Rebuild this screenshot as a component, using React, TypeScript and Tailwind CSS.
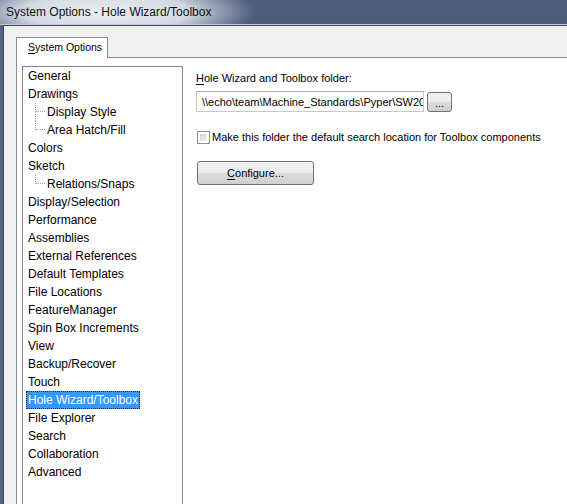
import React from 'react'

type Item = { label: string; child?: boolean; last?: boolean; selected?: boolean }

const items: Item[] = [
  { label: 'General' },
  { label: 'Drawings' },
  { label: 'Display Style', child: true },
  { label: 'Area Hatch/Fill', child: true, last: true },
  { label: 'Colors' },
  { label: 'Sketch' },
  { label: 'Relations/Snaps', child: true, last: true },
  { label: 'Display/Selection' },
  { label: 'Performance' },
  { label: 'Assemblies' },
  { label: 'External References' },
  { label: 'Default Templates' },
  { label: 'File Locations' },
  { label: 'FeatureManager' },
  { label: 'Spin Box Increments' },
  { label: 'View' },
  { label: 'Backup/Recover' },
  { label: 'Touch' },
  { label: 'Hole Wizard/Toolbox', selected: true },
  { label: 'File Explorer' },
  { label: 'Search' },
  { label: 'Collaboration' },
  { label: 'Advanced' },
]

function TreeRow({ item }: { item: Item }) {
  return (
    <div className="h-[18px] flex items-center">
      {item.child ? (
        <div className="pl-[12px] h-full flex">
          {/* dotted connector */}
          <div className="w-[10px] h-full flex flex-col">
            <div className="h-[9px] border-l border-b border-dotted border-[#a0a0a0]" />
            {!item.last && <div className="flex-1 border-l border-dotted border-[#a0a0a0]" />}
          </div>
        </div>
      ) : (
        <div className="w-[3px]" />
      )}
      <span
        className={`px-[2px] h-[18px] flex items-center whitespace-nowrap ${
          item.selected
            ? 'bg-[#3399ff] text-white outline-1 outline-dotted outline-[#2a2a2a] -outline-offset-1'
            : 'text-black'
        }`}
      >
        {item.label}
      </span>
    </div>
  )
}

export default function App() {
  return (
    <div className="w-[567px] h-[504px] overflow-hidden flex flex-col bg-[#56647f] font-['Liberation_Sans',Arial,sans-serif]">
      {/* Title bar */}
      <div className="h-[25px] shrink-0 flex items-center pl-[6px] text-[12px] text-[#111] border-b border-[#c3cad6] bg-[radial-gradient(ellipse_150px_34px_at_105px_12px,rgba(240,243,247,0.97)_0%,rgba(225,230,238,0.9)_55%,rgba(79,94,124,0)_100%),linear-gradient(#4f5e7d,#4c5b7a)]">
        System Options - Hole Wizard/Toolbox
      </div>

      {/* Window body */}
      <div className="flex-1 min-h-0 flex pl-[3px]">
        <div className="flex-1 min-w-0 flex flex-col bg-[#f0f0f0] border-t border-l border-[#3a4660] pl-[12px] pt-[11px]">
          {/* Tab */}
          <div className="relative z-10 -mb-px w-[92px] h-[21px] shrink-0 border border-b-0 border-[#898c95] bg-white pl-[11px] flex items-center text-[10.5px] text-black">
            <span className="underline underline-offset-2">S</span>ystem Options
          </div>

          {/* Tab panel */}
          <div className="flex-1 min-h-0 overflow-hidden flex items-start border-t border-l border-[#898c95] bg-white">
            <div className="ml-[5px] mt-[8px] w-[161px] h-[460px] shrink-0 border border-[#828790] bg-white text-[12px]">
              {items.map((it) => (
                <TreeRow key={it.label} item={it} />
              ))}
            </div>

            <div className="ml-[13px] pt-[13px] text-[11px] leading-[14px] text-black">
              <div>
                <span className="underline underline-offset-2">H</span>ole Wizard and Toolbox folder:
              </div>

              <div className="mt-[6px] flex items-start gap-[3px]">
                <div className="w-[228px] h-[21px] border border-[#c4c8cf] border-t-[#abadb3] pl-[5px] flex items-center overflow-hidden whitespace-nowrap">
                  {'\\\\echo\\team\\Machine_Standards\\Pyper\\SW2016'}
                </div>
                <button className="mt-[1px] w-[25px] h-[20px] rounded-[3px] border border-[#707070] bg-[linear-gradient(#f2f2f2_0%,#ebebeb_50%,#dddddd_50%,#cfcfcf_100%)] text-[11px] leading-[14px] pt-[2px]">
                  ...
                </button>
              </div>

              <div className="mt-[18px] h-[14px] flex items-center">
                <div className="ml-px w-[13px] h-[13px] border border-[#8e8f8f] bg-white p-[2px]">
                  <div className="w-full h-full bg-[linear-gradient(135deg,#cbcfd5,#f6f6f6)]" />
                </div>
                <span className="ml-[2px]">Make this folder the default search location for Toolbox components</span>
              </div>

              <button className="mt-[17px] ml-px w-[117px] h-[24px] rounded-[3px] border border-[#707070] bg-[linear-gradient(#f2f2f2_0%,#ebebeb_50%,#dddddd_50%,#cfcfcf_100%)] text-[11px] text-black flex items-center justify-center">
                <span className="underline underline-offset-2">C</span>onfigure...
              </button>
            </div>
          </div>
        </div>
      </div>
    </div>
  )
}
